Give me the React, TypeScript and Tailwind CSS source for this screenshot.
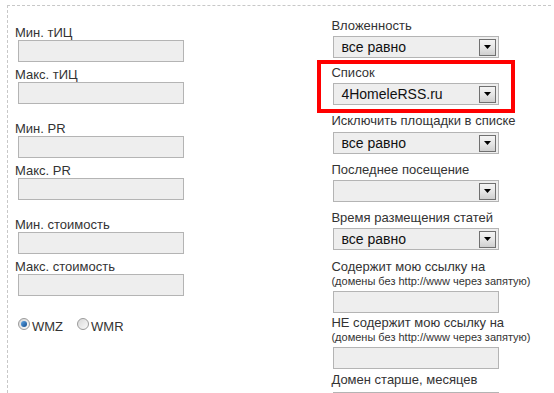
import React from 'react'

const leftGroups = [
  ['Мин. тИЦ', 'Макс. тИЦ'],
  ['Мин. PR', 'Макс. PR'],
  ['Мин. стоимость', 'Макс. стоимость'],
]

function Field() {
  return <div className="w-[166px] h-[22px] border border-[#b4b4b4] bg-[#eeeeee]" />
}

function Select({ value }: { value?: string }) {
  return (
    <div className="flex items-center w-[166px] h-[22px] border border-[#b4b4b4] bg-[#eeeeee] pl-[7px] pr-[2px]">
      <span className="flex-1 text-[14px] leading-none text-[#111]">{value}</span>
      <span className="flex items-center justify-center w-[17px] h-[17px] border border-[#707070] bg-gradient-to-b from-[#f4f4f4] via-[#e6e6e6] to-[#cfcfcf]">
        <svg width="7" height="4" viewBox="0 0 7 4">
          <path d="M0 0h7L3.5 4z" fill="#000" />
        </svg>
      </span>
    </div>
  )
}

function Radio({ checked, label }: { checked?: boolean; label: string }) {
  return (
    <label className="flex items-start">
      <span className="mt-[-1px] flex items-center justify-center w-[12px] h-[12px] rounded-full border border-[#9a9a9a] bg-gradient-to-br from-[#d8d8d8] to-[#fbfbfb]">
        {checked && (
          <span className="w-[6px] h-[6px] rounded-full bg-gradient-to-br from-[#5fa6e6] to-[#114d8f]" />
        )}
      </span>
      <span className="ml-[2px]">{label}</span>
    </label>
  )
}

export default function App() {
  return (
    <div className="h-[393px] overflow-hidden bg-white pl-[7px] pt-[5px] font-['Liberation_Sans',Arial,sans-serif] text-[13px] text-[#333]">
      <div className="flex w-[544px] h-[388px] overflow-hidden border-t border-l border-dashed border-[#c8c8c8]">
        {/* left column */}
        <div className="w-[310px] pl-[7px] pt-[2px]">
          {leftGroups.map((g) => (
            <div key={g[0]} className="mt-[17px]">
              <div className="leading-[15px]">{g[0]}</div>
              <div className="ml-[3px]"><Field /></div>
              <div className="mt-[5px] leading-[15px]">{g[1]}</div>
              <div className="ml-[3px]"><Field /></div>
            </div>
          ))}
          <div className="mt-[23px] ml-[3px] flex gap-[14px] leading-[16px]">
            <Radio checked label="WMZ" />
            <Radio label="WMR" />
          </div>
        </div>

        {/* right column */}
        <div className="w-[234px] pt-[12px] leading-[16px]">
          <div className="pl-[14px]">Вложенность</div>
          <div className="ml-[16px] mt-[2px]"><Select value="все равно" /></div>

          <div className="mt-[2px] w-[198px] border-4 border-[#ff0000] pt-[1px] pb-[4px]">
            <div className="pl-[10px]">Список</div>
            <div className="ml-[12px] mt-[2px]"><Select value="4HomeleRSS.ru" /></div>
          </div>

          <div className="pl-[14px]">Исключить площадки в списке</div>
          <div className="ml-[16px] mt-[3px]"><Select value="все равно" /></div>

          <div className="pl-[14px] mt-[8px]">Последнее посещение</div>
          <div className="ml-[16px] mt-[2px]"><Select /></div>

          <div className="pl-[14px] mt-[8px]">Время размещения статей</div>
          <div className="ml-[16px] mt-[2px]"><Select value="все равно" /></div>

          <div className="pl-[14px] mt-[9px]">Содержит мою ссылку на</div>
          <div className="pl-[14px] text-[11px] leading-[13px]">(домены без http://www через запятую)</div>
          <div className="ml-[16px] mt-[3px]"><Field /></div>

          <div className="pl-[14px] mt-[2px]">НЕ содержит мою ссылку на</div>
          <div className="pl-[14px] text-[11px] leading-[13px]">(домены без http://www через запятую)</div>
          <div className="ml-[16px] mt-[3px]"><Field /></div>

          <div className="pl-[14px] mt-[3px]">Домен старше, месяцев</div>
          <div className="ml-[16px] mt-[4px]"><Field /></div>
        </div>
      </div>
    </div>
  )
}
